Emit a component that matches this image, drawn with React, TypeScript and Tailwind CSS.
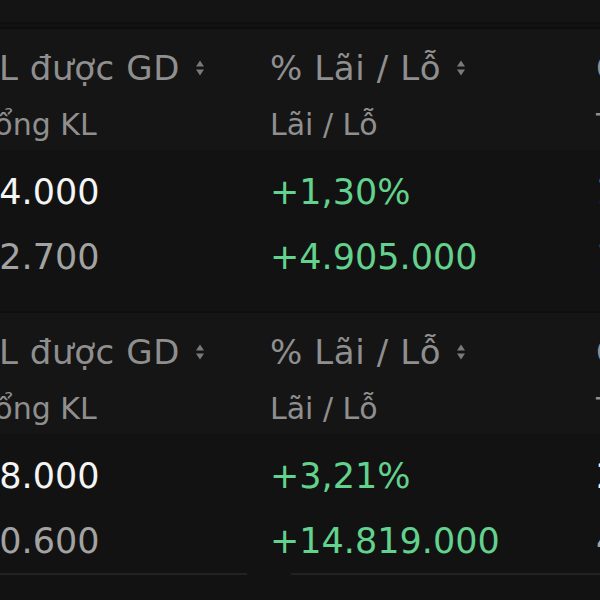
import React from "react";

const font = { fontFamily: '"DejaVu Sans", "Noto Sans", sans-serif' };

function SortIcon() {
  return (
    <svg width="10" height="18" viewBox="0 0 10 18" className="ml-[15px] shrink-0">
      <path d="M1 7.5 L5 1.5 L9 7.5 Z" fill="#7a7a7a" />
      <path d="M1 10.5 L5 16.5 L9 10.5 Z" fill="#7a7a7a" />
    </svg>
  );
}

type Block = {
  c1: [string, string];
  c2: [string, string];
  c3: [string, string];
  line?: boolean;
};

const blocks: Block[] = [
  { c1: ["14.000", "12.700"], c2: ["+1,30%", "+4.905.000"], c3: ["18.500", "1.230.000"] },
  { c1: ["18.000", "10.600"], c2: ["+3,21%", "+14.819.000"], c3: ["24.100", "4.628.000"], line: true },
];

function HeaderCell({ title, sub, w }: { title: string; sub: string; w: string }) {
  return (
    <div className={`${w} shrink-0 flex flex-col`}>
      <div className="h-[56px] flex items-center text-[34px] tracking-[0.6px] text-[#8f8f8f] whitespace-nowrap">
        <span>{title}</span>
        <SortIcon />
      </div>
      <div className="h-[56px] flex items-center text-[30px] text-[#8f8f8f] whitespace-nowrap">{sub}</div>
    </div>
  );
}

function ValueCell({ v, w, color }: { v: string; w: string; color: string }) {
  return <div className={`${w} shrink-0 whitespace-nowrap ${color}`}>{v}</div>;
}

export default function App() {
  return (
    <div className="w-[600px] h-[600px] overflow-hidden bg-[#121212]" style={font}>
      <div className="h-[24px] bg-[#141414] border-b-2 border-[#0f0f0f]" />
      <div className="h-[3px]" />
      {blocks.map((b, i) => (
        <div key={i} className="h-[284px] flex flex-col">
          <div className="h-[123px] bg-[#151515] border-t-2 border-[#0e0e0e] pt-[11px]">
            <div className="flex ml-[-24px]">
              <HeaderCell title="KL được GD" sub="Tổng KL" w="w-[294px]" />
              <HeaderCell title="% Lãi / Lỗ" sub="Lãi / Lỗ" w="w-[326px]" />
              <HeaderCell title="Giá vốn" sub="Thị giá" w="w-[200px]" />
            </div>
          </div>
          <div className="pt-[8px] text-[35px]">
            <div className="h-[68px] flex items-center ml-[-23px]">
              <ValueCell v={b.c1[0]} w="w-[293px]" color="text-[#f4f4f4]" />
              <ValueCell v={b.c2[0]} w="w-[326px]" color="text-[#62d28e]" />
              <ValueCell v={b.c3[0]} w="w-[200px]" color="text-[#f4f4f4]" />
            </div>
            <div className="h-[63px] flex items-center ml-[-23px]">
              <ValueCell v={b.c1[1]} w="w-[293px]" color="text-[#a3a3a3]" />
              <ValueCell v={b.c2[1]} w="w-[326px]" color="text-[#62d28e]" />
              <ValueCell v={b.c3[1]} w="w-[200px]" color="text-[#a3a3a3]" />
            </div>
            {b.line && (
              <div className="flex">
                <div className="w-[247px] h-[2px] bg-[#222222]" />
                <div className="w-[44px]" />
                <div className="flex-1 h-[2px] bg-[#222222]" />
              </div>
            )}
          </div>
        </div>
      ))}
    </div>
  );
}
